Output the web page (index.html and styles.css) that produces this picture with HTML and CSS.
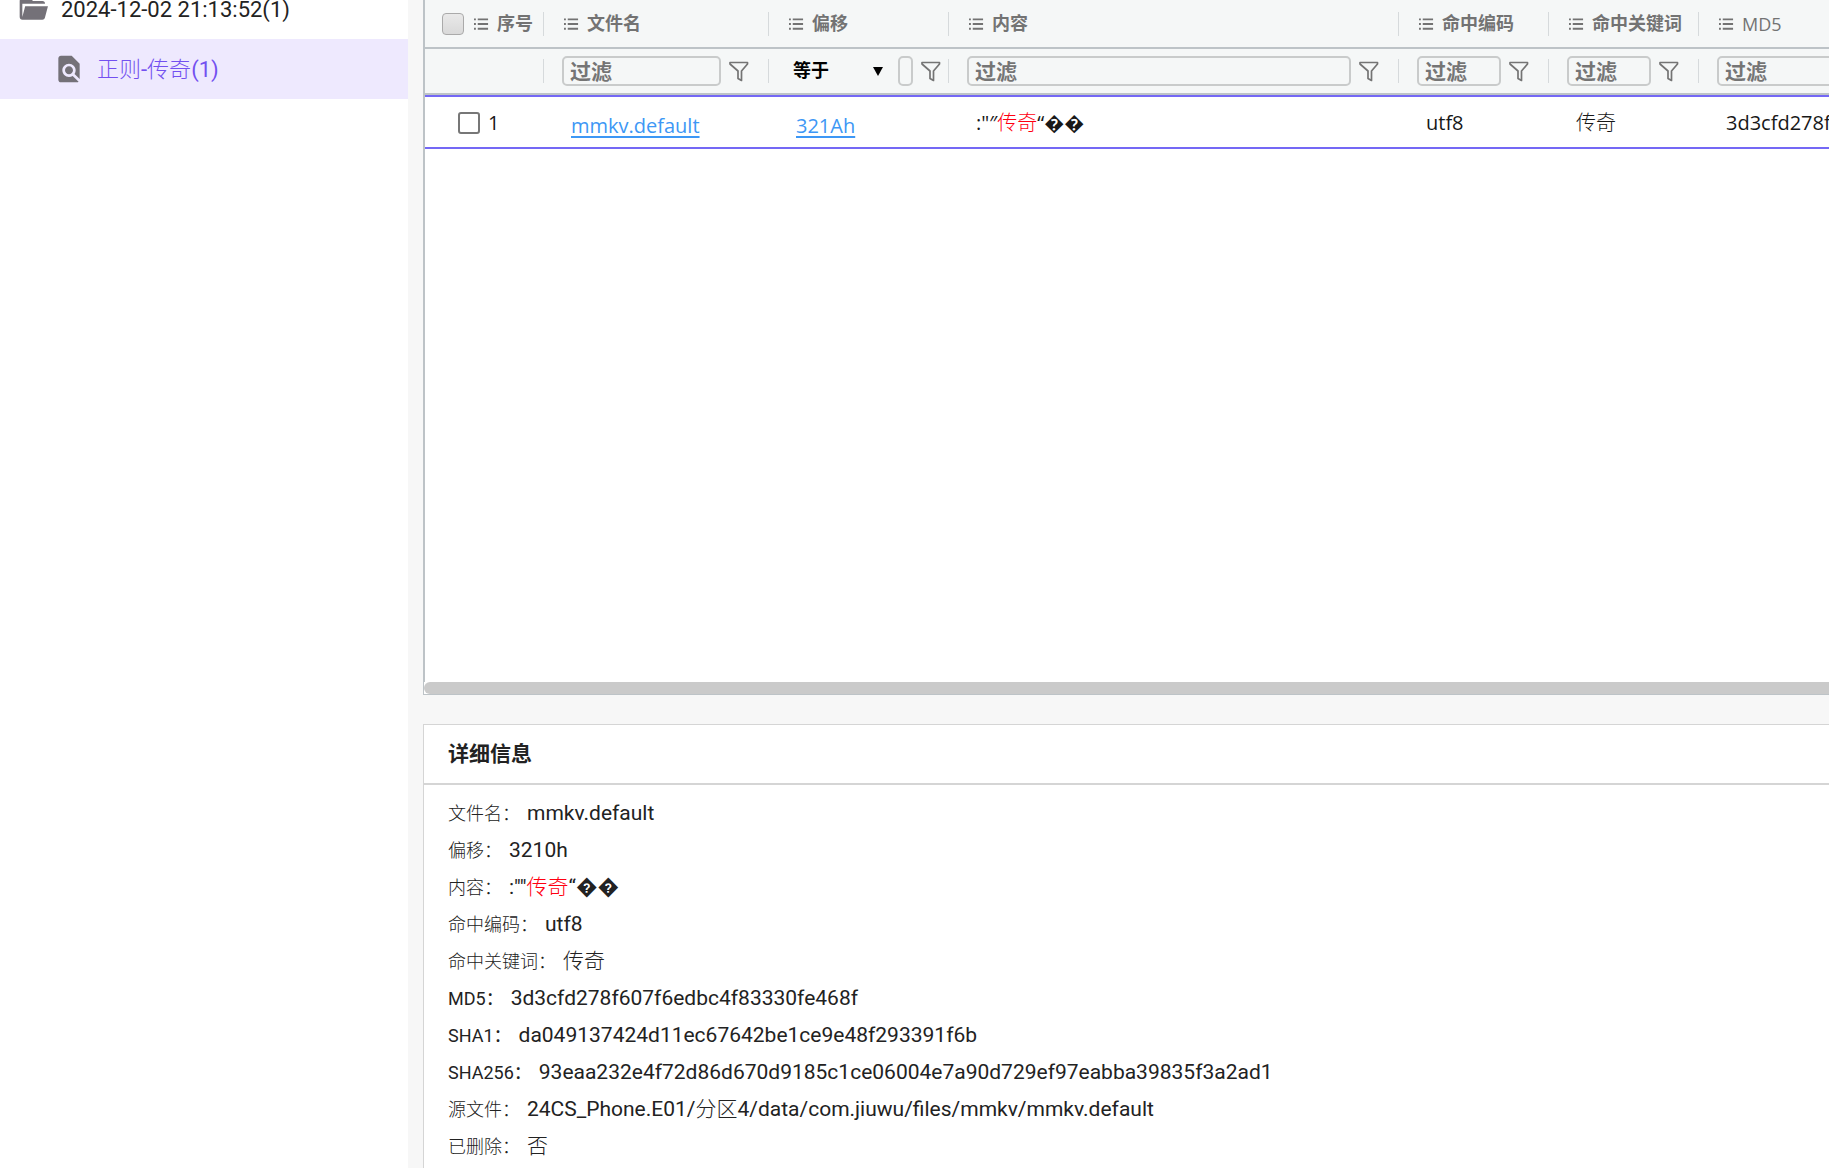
FILE: index.html
```html
<!DOCTYPE html>
<html lang="zh-CN">
<head>
<meta charset="utf-8">
<meta name="viewport" content="width=device-width, initial-scale=1">
<title>搜索结果</title>
<link rel="stylesheet" href="styles.css">
</head>
<body>
<svg class="sprite" aria-hidden="true">
  <symbol id="menu" viewBox="0 0 16 14">
    <path d="M0 2h2M0 7h2M0 12h2M4 2h11M4 7h11M4 12h11" fill="none" stroke="currentColor" stroke-width="2"/>
  </symbol>
  <symbol id="funnel" viewBox="0 0 20 21">
    <path d="M1 1.500h17.500V3L12.500 10v9.500l-3.500-2V10L1 3z" fill="none" stroke="currentColor" stroke-width="1.700" stroke-linejoin="round"/>
  </symbol>
</svg>
<div class="app">
  <nav class="sidebar" aria-label="任务">
    <ul class="tree">
      <li class="node">
        <svg class="node-icon" viewBox="0 0 24 24"><path d="M19 20H4c-1.110 0-2-.9-2-2V6c0-1.110.89-2 2-2h6l2 2h7a2 2 0 0 1 2 2H4v10l2.140-8h17.070l-2.280 8.500c-.23.87-1.010 1.500-1.930 1.500z"/></svg>
        <span>2024-12-02 21:13:52(1)</span>
      </li>
      <li class="node node-child node-active">
        <svg class="node-icon" viewBox="0 0 24 24"><path d="M20 19.590V8l-6-6H6c-1.100 0-1.990.9-1.990 2L4 20c0 1.100.89 2 1.990 2H18c.45 0 .85-.15 1.190-.4l-4.430-4.430c-.8.52-1.740.83-2.760.83-2.760 0-5-2.240-5-5s2.240-5 5-5 5 2.240 5 5c0 1.020-.31 1.960-.83 2.750L20 19.590zM9 13c0 1.660 1.340 3 3 3s3-1.340 3-3-1.340-3-3-3-3 1.340-3 3z"/></svg>
        <span><span class="light">正则</span>-<span class="light">传奇</span>(1)</span>
      </li>
    </ul>
  </nav>
  <main class="main">
    <section class="results">
      <div class="viewport">
        <table class="grid">
          <colgroup>
            <col class="c-index"><col class="c-file"><col class="c-offset"><col class="c-content"><col class="c-code"><col class="c-code"><col class="c-hash">
          </colgroup>
          <thead>
            <tr class="titles">
              <th><div class="cell cell-index"><input type="checkbox" class="check-all" aria-label="全选"><svg class="menu"><use href="#menu"/></svg>序号</div></th>
              <th><div class="cell"><svg class="menu"><use href="#menu"/></svg>文件名</div></th>
              <th><div class="cell"><svg class="menu"><use href="#menu"/></svg>偏移</div></th>
              <th><div class="cell"><svg class="menu"><use href="#menu"/></svg>内容</div></th>
              <th><div class="cell"><svg class="menu"><use href="#menu"/></svg>命中编码</div></th>
              <th><div class="cell"><svg class="menu"><use href="#menu"/></svg>命中关键词</div></th>
              <th><div class="cell latin"><svg class="menu"><use href="#menu"/></svg>MD5</div></th>
            </tr>
            <tr class="filters">
              <td><div class="cell"></div></td>
              <td><div class="cell"><input class="filter" type="text" placeholder="过滤" aria-label="过滤文件名"><button class="funnel" aria-label="筛选文件名"><svg><use href="#funnel"/></svg></button></div></td>
              <td><div class="cell cell-operator"><span class="operator"><select aria-label="偏移条件"><option>等于</option></select></span><input class="filter" type="text" aria-label="过滤偏移"><button class="funnel" aria-label="筛选偏移"><svg><use href="#funnel"/></svg></button></div></td>
              <td><div class="cell"><input class="filter" type="text" placeholder="过滤" aria-label="过滤内容"><button class="funnel" aria-label="筛选内容"><svg><use href="#funnel"/></svg></button></div></td>
              <td><div class="cell"><input class="filter" type="text" placeholder="过滤" aria-label="过滤命中编码"><button class="funnel" aria-label="筛选命中编码"><svg><use href="#funnel"/></svg></button></div></td>
              <td><div class="cell"><input class="filter" type="text" placeholder="过滤" aria-label="过滤命中关键词"><button class="funnel" aria-label="筛选命中关键词"><svg><use href="#funnel"/></svg></button></div></td>
              <td><div class="cell"><input class="filter" type="text" placeholder="过滤" aria-label="过滤MD5"><button class="funnel" aria-label="筛选MD5"><svg><use href="#funnel"/></svg></button></div></td>
            </tr>
          </thead>
          <tbody>
            <tr>
              <td><label class="pick"><input type="checkbox" class="check-row">1</label></td>
              <td class="linked"><a class="link" href="#file">mmkv.default</a></td>
              <td class="linked"><a class="link" href="#offset">321Ah</a></td>
              <td>:"″<em class="hit">传奇</em>“��</td>
              <td>utf8</td>
              <td><span class="light">传奇</span></td>
              <td>3d3cfd278f607f6edbc4f83330fe468f</td>
            </tr>
          </tbody>
        </table>
      </div>
      <div class="scroll-track"><div class="scroll-thumb"></div></div>
    </section>
    <section class="details">
      <h2 class="details-title">详细信息</h2>
      <dl class="fields">
        <div class="field"><dt class="light">文件名：</dt><dd>mmkv.default</dd></div>
        <div class="field"><dt class="light">偏移：</dt><dd>3210h</dd></div>
        <div class="field"><dt class="light">内容：</dt><dd>:"″<em class="hit">传奇</em>“��</dd></div>
        <div class="field"><dt class="light">命中编码：</dt><dd>utf8</dd></div>
        <div class="field"><dt class="light">命中关键词：</dt><dd class="light">传奇</dd></div>
        <div class="field"><dt>MD5：</dt><dd>3d3cfd278f607f6edbc4f83330fe468f</dd></div>
        <div class="field"><dt>SHA1：</dt><dd>da049137424d11ec67642be1ce9e48f293391f6b</dd></div>
        <div class="field"><dt>SHA256：</dt><dd>93eaa232e4f72d86d670d9185c1ce06004e7a90d729ef97eabba39835f3a2ad1</dd></div>
        <div class="field"><dt class="light">源文件：</dt><dd>24CS_Phone.E01/<span class="light">分区</span>4/data/com.jiuwu/files/mmkv/mmkv.default</dd></div>
        <div class="field"><dt class="light">已删除：</dt><dd class="light">否</dd></div>
      </dl>
    </section>
  </main>
</div>
</body>
</html>
```

FILE: styles.css
```css
* { box-sizing: border-box; }

body {
  margin: 0;
  background: #f7f7f7;
  color: #222;
  font: 21px/30px Roboto, "Noto Sans CJK SC", sans-serif;
}

input, select, button { font: inherit; margin: 0; }
.sprite { display: none; }
.light, .hit { font-weight: 300; }
.hit { color: #f01; font-style: normal; }

.app { display: flex; height: 100vh; overflow: hidden; }

/* Task tree */
.sidebar { flex: 0 0 408px; background: #fff; font-size: 22px; }
.tree { list-style: none; margin: -21px 0 0; padding: 0; }
.node {
  display: flex;
  align-items: center;
  gap: 12px;
  height: 60px;
  padding-left: 17px;
}
.node span { line-height: 32px; }
.node > span { padding-top: 2px; }
.node-child { padding-left: 53px; }
.node-active { background: #eee9fe; color: #7350f0; }
.node-icon { width: 32px; height: 32px; fill: #747178; }

/* Right side */
.main {
  flex: 1;
  min-width: 0;
  display: flex;
  flex-direction: column;
  gap: 29px;
  padding-left: 15px;
}

.results {
  flex: 695 1 0;
  min-height: 0;
  display: flex;
  flex-direction: column;
  background: #fff;
  border-left: 1px solid #bdc3c7;
  border-bottom: 1px solid #bdc3c7;
}
.viewport { flex: 1; min-height: 0; overflow: hidden; border-left: 1px solid #bdc3c7; }
.scroll-track { height: 12px; }
.scroll-thumb { height: 12px; background: #cacaca; border-radius: 6px 0 0 6px; }

.grid {
  table-layout: fixed;
  border-collapse: separate;
  border-spacing: 0;
  width: 1724px;
}
.c-index { width: 119px; }
.c-file { width: 225px; }
.c-offset { width: 180px; }
.c-content { width: 450px; }
.c-code { width: 150px; }
.c-hash { width: 450px; }

thead { background: #f5f7f7; color: #737373; }
.titles th, .filters td { padding: 0; border-bottom: 2px solid #bdc3c7; }
.titles th { height: 49px; font-size: 18px; }
.filters td { height: 46px; }
.cell {
  display: flex;
  align-items: center;
  height: 24px;
  padding: 0 19px 0 18px;
  border-right: 1px solid #d6dadc;
  white-space: nowrap;
}
.cell.latin { font-weight: 400; font-family: "Open Sans", sans-serif; }
.titles .cell { gap: 8px; padding: 0 0 0 20px; }
.titles .cell-index { padding: 0 0 0 17px; }
.menu { width: 15px; height: 14px; flex: none; }
.check-all {
  appearance: none;
  width: 22px;
  height: 22px;
  margin-right: 2px;
  border: 1px solid #aaa;
  border-radius: 4px;
  background: linear-gradient(#e9e9e9, #d9d9d9);
}

.filter {
  flex: 1;
  min-width: 0;
  height: 30px;
  padding: 2px 6px 0;
  border: 2px solid #c9cbcb;
  border-radius: 5px;
  background: transparent;
  font-weight: 700;
}
.filter::placeholder { color: #757575; opacity: 1; }
.funnel {
  display: flex;
  padding: 0;
  margin-left: 8px;
  border: 0;
  background: none;
  color: #747474;
}
.funnel svg { width: 20px; height: 21px; }
.filters .cell-operator { padding-right: 7px; }
.operator {
  display: flex;
  flex: none;
  align-items: center;
  width: 111px;
  padding-right: 15px;
}
.operator select {
  appearance: none;
  flex: 1;
  height: 30px;
  padding: 0 6px;
  border: 0;
  background: none;
  color: #000;
  font-size: 18px;
  font-weight: 700;
}
.operator::after {
  content: "";
  border: 5px solid transparent;
  border-top: 9px solid #000;
  border-bottom: 0;
}
.cell-operator .filter { padding: 0; }

tbody td {
  height: 54px;
  padding: 2px 27px 0;
  border-top: 2px solid #7468f5;
  border-bottom: 2px solid #7468f5;
  color: #181818;
  font-family: "Open Sans", "Noto Sans CJK SC", sans-serif;
  font-size: 20px;
  white-space: nowrap;
}
tbody td.linked { padding-top: 8px; }
.link { color: #3d97f5; text-underline-offset: 3px; text-decoration-thickness: 2px; }
.pick { display: flex; align-items: center; gap: 8px; }
tbody td:first-child { padding: 2px 0 0 33px; }
.check-row {
  appearance: none;
  width: 22px;
  height: 22px;
  border: 2px solid #777;
  border-radius: 3px;
}

/* Record details */
.details {
  flex: 444 1 0;
  min-height: 0;
  overflow: hidden;
  background: #fff;
  border-top: 1px solid #d5d5d5;
  border-left: 1px solid #d5d5d5;
}
.details-title {
  margin: 0;
  padding: 14px 24px;
  border-bottom: 2px solid #d5d5d5;
  font-size: 21px;
  line-height: 30px;
}
.fields { margin: 0; padding: 10px 24px; }
.field { display: flex; align-items: baseline; height: 37px; line-height: 37px; }
.field dt { font-size: 18px; }
.field dd { margin: 0 0 0 7px; }
```
